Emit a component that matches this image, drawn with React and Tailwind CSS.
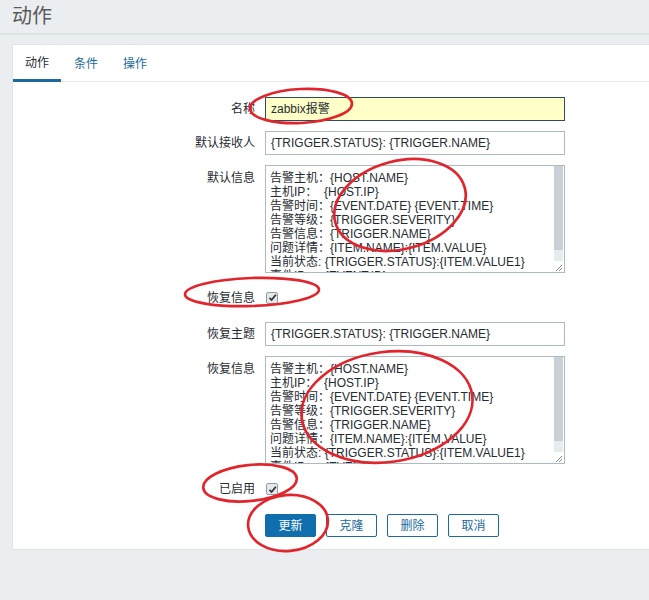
import React from "react";

const FONT = { fontFamily: '"Liberation Sans", Arial, "Noto Sans CJK SC", sans-serif' };

const msg = [
  "告警主机：{HOST.NAME}",
  "主机IP：  {HOST.IP}",
  "告警时间：{EVENT.DATE} {EVENT.TIME}",
  "告警等级：{TRIGGER.SEVERITY}",
  "告警信息：{TRIGGER.NAME}",
  "问题详情：{ITEM.NAME}:{ITEM.VALUE}",
  "当前状态: {TRIGGER.STATUS}:{ITEM.VALUE1}",
  "事件ID：  {EVENT.ID}",
];

function Label({ children, top }) {
  return (
    <div className={`text-right text-[12px] leading-[16px] text-[#1f2c33] ${top ? "pt-[5px]" : "self-center"}`}>
      {children}
    </div>
  );
}

function Input({ value, focus }) {
  return (
    <div
      className={`h-[24px] w-[300px] border px-[5px] flex items-center text-[12px] text-[#1f2c33] whitespace-pre ${
        focus ? "border-[#2b4d5c] bg-[#ffffc8]" : "border-[#acbbc2] bg-white"
      }`}
    >
      {value}
    </div>
  );
}

function TextArea() {
  return (
    <div className="h-[108px] w-[300px] border border-[#acbbc2] bg-white flex">
      <div className="flex-1 overflow-hidden pl-[4px] pt-[5px] text-[12px] leading-[14px] text-[#1f2c33] whitespace-pre">
        {msg.map((l, i) => (
          <div key={i}>{l}</div>
        ))}
      </div>
      <div className="w-[10px] flex flex-col pr-[1px]">
        <div className="h-[84px] bg-[#c8d1d7]"></div>
        <div className="flex-1 bg-[#e6ebee]"></div>
        <div className="h-[11px] bg-white flex items-end justify-end">
          <svg width="9" height="9" viewBox="0 0 9 9">
            <path d="M8 2 L2 8 M8 5 L5 8" stroke="#888" strokeWidth="1" />
          </svg>
        </div>
      </div>
    </div>
  );
}

function Check() {
  return (
    <div className="self-center w-[12px] h-[12px] border border-[#8f9ca4] bg-[#e4e8ea] rounded-[2px] flex items-center justify-center">
      <svg width="9" height="9" viewBox="0 0 9 9">
        <path d="M1.5 4.8 L3.6 7 L7.8 1.8" stroke="#333" strokeWidth="1.8" fill="none" />
      </svg>
    </div>
  );
}

function Row({ label, top, children }) {
  return (
    <div className="grid grid-cols-[242px_300px] gap-x-[10px]">
      <Label top={top}>{label}</Label>
      <div className="flex">{children}</div>
    </div>
  );
}

function Btn({ children, primary }) {
  return (
    <div
      className={`h-[23px] w-[51px] flex items-center justify-center text-[12px] border rounded-[2px] ${
        primary ? "bg-[#0f6eab] border-[#0f6eab] text-white" : "bg-white border-[#1b6a9a] text-[#1b6a9a]"
      }`}
    >
      {children}
    </div>
  );
}

export default function App() {
  return (
    <div style={FONT} className="relative w-[649px] h-[600px] bg-[#ebeef0] overflow-hidden">
      <div className="h-[35px] px-3 pt-[2px] border-b-2 border-[#dee3e6] text-[20px] leading-[28px] text-[#5a5a5a]">
        动作
      </div>
      <div className="pt-[9px]">
        <div className="ml-3 bg-white border border-r-0 border-[#dfe4e7] h-[506px]">
          <div className="flex h-[37px] border-b border-[#e6eaec] text-[12px]">
            <div className="px-[12px] pt-[2px] flex items-center border-b-[3px] border-[#1b6a9a] text-[#1f2c33] -mb-px">动作</div>
            <div className="px-[13px] pt-[2px] flex items-center text-[#1b6a9a]">条件</div>
            <div className="px-[12px] pt-[2px] flex items-center text-[#1b6a9a]">操作</div>
          </div>
          <div className="pt-[15px] flex flex-col gap-[10px]">
            <Row label="名称">
              <Input value="zabbix报警" focus />
            </Row>
            <Row label="默认接收人">
              <Input value="{TRIGGER.STATUS}: {TRIGGER.NAME}" />
            </Row>
            <Row label="默认信息" top>
              <TextArea />
            </Row>
            <div className="grid grid-cols-[242px_300px] gap-x-[10px] h-[29px]">
              <Label>恢复信息</Label>
              <div className="flex pl-[1px]">
                <Check />
              </div>
            </div>
            <Row label="恢复主题">
              <Input value="{TRIGGER.STATUS}: {TRIGGER.NAME}" />
            </Row>
            <Row label="恢复信息" top>
              <TextArea />
            </Row>
            <div className="grid grid-cols-[242px_300px] gap-x-[10px] h-[30px]">
              <Label>已启用</Label>
              <div className="flex pl-[1px]">
                <Check />
              </div>
            </div>
            <div className="flex gap-[10px] pl-[252px]">
              <Btn primary>更新</Btn>
              <Btn>克隆</Btn>
              <Btn>删除</Btn>
              <Btn>取消</Btn>
            </div>
          </div>
        </div>
      </div>
      <svg className="absolute inset-0 pointer-events-none" width="649" height="600" viewBox="0 0 649 600">
        <g fill="none" stroke="#e1252d" strokeWidth="2.7">
          <ellipse cx="301" cy="106" rx="51" ry="17" transform="rotate(-3 301 106)" />
          <ellipse cx="400" cy="205" rx="67" ry="44" transform="rotate(-15 400 205)" />
          <ellipse cx="252" cy="292" rx="67" ry="14" transform="rotate(-2 252 292)" />
          <ellipse cx="387" cy="407" rx="86" ry="55" transform="rotate(-8 387 407)" />
          <ellipse cx="250" cy="483" rx="47" ry="18" transform="rotate(-6 250 483)" />
          <ellipse cx="288" cy="523" rx="40" ry="28" transform="rotate(-5 288 523)" />
        </g>
      </svg>
    </div>
  );
}
